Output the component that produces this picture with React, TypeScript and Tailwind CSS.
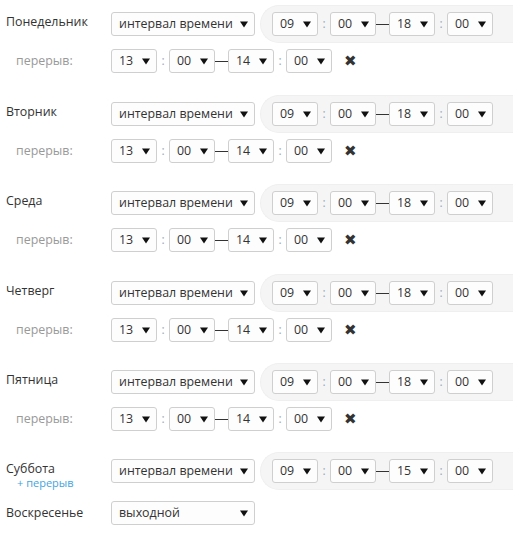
import React from 'react';

type Day = {
    name: string;
    from: [string, string];
    to: [string, string];
    lunch?: boolean;
    gap: string;
};

const days: Day[] = [
    { name: 'Понедельник', from: ['09', '00'], to: ['18', '00'], lunch: true, gap: 'mb-[22px]' },
    { name: 'Вторник', from: ['09', '00'], to: ['18', '00'], lunch: true, gap: 'mb-[21px]' },
    { name: 'Среда', from: ['09', '00'], to: ['18', '00'], lunch: true, gap: 'mb-[22px]' },
    { name: 'Четверг', from: ['09', '00'], to: ['18', '00'], lunch: true, gap: 'mb-[21px]' },
    { name: 'Пятница', from: ['09', '00'], to: ['18', '00'], lunch: true, gap: 'mb-[21px]' },
    { name: 'Суббота', from: ['09', '00'], to: ['15', '00'], gap: 'mb-[4px]' },
];

const Arrow = () => (
    <svg width="8" height="7" viewBox="0 0 8 7" className="shrink-0">
        <path d="M0 0.5 H8 L4 6.5 Z" fill="#111" />
    </svg>
);

const Select = ({ value, className }: { value: string; className: string }) => (
    <div
        className={`h-6 flex items-center justify-between pl-[7px] pr-[6px] border border-[#cfcfcf] rounded-[3px] bg-[#fdfdfd] text-[12.4px] text-[#333] leading-none shrink-0 ${className}`}
    >
        <span>{value}</span>
        <Arrow />
    </div>
);

const Colon = () => (
    <span className="w-3 text-center text-[12px] text-[#9ab] leading-none">:</span>
);

const Dash = () => <div className="w-[13px] h-px bg-[#333] shrink-0" />;

const TimeRange = ({ from, to }: { from: [string, string]; to: [string, string] }) => (
    <div className="flex items-center">
        <Select value={from[0]} className="w-[46px]" />
        <Colon />
        <Select value={from[1]} className="w-[46px]" />
        <Dash />
        <Select value={to[0]} className="w-[46px]" />
        <Colon />
        <Select value={to[1]} className="w-[46px]" />
    </div>
);

const DayBlock = ({ day }: { day: Day }) => (
    <div className={day.gap}>
        <div className="flex items-start h-[38px]">
            <div className="w-[111px] pl-1.5 pt-[9px] shrink-0">
                <div className="text-[12.4px] leading-[16px] text-[#333]">{day.name}</div>
                {!day.lunch && (
                    <div className="pl-[11px] text-[11px] leading-[12px] text-[#42a5e0]">+ перерыв</div>
                )}
            </div>
            <div className="h-[38px] flex items-center">
                <Select value="интервал времени" className="w-[144px]" />
            </div>
            <div className="ml-[5px] h-[38px] flex-1 flex items-center pl-[11px] bg-[#f5f5f5] border border-r-0 border-[#efefef] rounded-l-full">
                <TimeRange from={day.from} to={day.to} />
            </div>
        </div>
        {day.lunch && (
            <div className="flex items-center h-6 mt-[6px]">
                <div className="w-[111px] pl-4 shrink-0 text-[12.4px] text-[#999]">перерыв:</div>
                <TimeRange from={['13', '00']} to={['14', '00']} />
                <span
                    className="ml-3 text-[15px] text-[#333] leading-none"
                    style={{ fontFamily: '"DejaVu Sans", sans-serif' }}
                >
                    ✖
                </span>
            </div>
        )}
    </div>
);

export default function App() {
    return (
        <div
            className="w-[513px] pt-[5px] bg-white"
            style={{ fontFamily: '"Open Sans", "Noto Sans", sans-serif' }}
        >
            {days.map((d) => (
                <DayBlock key={d.name} day={d} />
            ))}
            <div className="flex items-center h-[38px]">
                <div className="w-[111px] pl-1.5 shrink-0 text-[12.4px] text-[#333]">Воскресенье</div>
                <Select value="выходной" className="w-[144px]" />
            </div>
        </div>
    );
}
